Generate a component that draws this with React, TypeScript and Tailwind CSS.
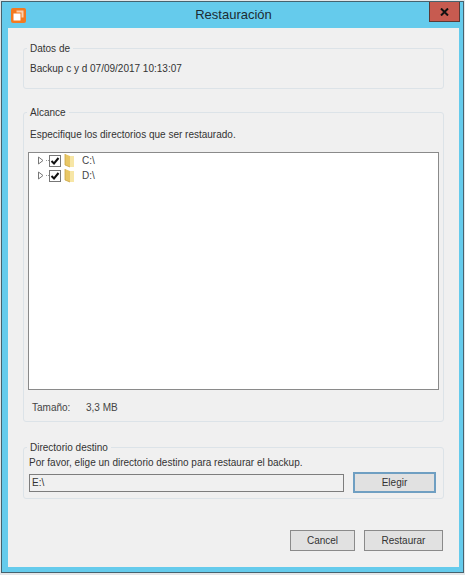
// App.tsx - Restauración dialog
import React from 'react';

const FONT = "font-['Liberation_Sans',Arial,sans-serif]";

const GroupBox: React.FC<{ title: string; className: string; children: React.ReactNode }> = ({ title, className, children }) => (
  <div className={`border border-[#dce3e8] rounded-[3px] ${className}`}>
    <div className="-mt-[7px] ml-[3px] w-fit bg-[#f0f0f0] px-[3px] text-[10px] leading-[14px] text-[#333]">{title}</div>
    {children}
  </div>
);

const FolderIcon = () => (
  <svg width="12" height="15" viewBox="0 0 12 15">
    <path d="M2 1 L7 3 L7 14 L2 12 Z" fill="#e9c765" />
    <path d="M7 3 L11 3 L11 14 L7 14 Z" fill="#f7e6a6" />
    <path d="M2 1 L2 12 L7 14" fill="none" stroke="#c9a545" strokeWidth="0.8" />
  </svg>
);

const TreeRow: React.FC<{ label: string }> = ({ label }) => (
  <div className="flex h-[15px] items-center">
    <svg width="8" height="9" viewBox="0 0 8 9" className="ml-[8px]">
      <path d="M1.5 1 L6 4.5 L1.5 8 Z" fill="#fff" stroke="#777" strokeWidth="1" />
    </svg>
    <div className="ml-[1px] w-[3px] border-t border-dotted border-[#999]" />
    <div className="flex h-[12px] w-[12px] items-center justify-center border border-[#777] bg-white">
      <svg width="10" height="10" viewBox="0 0 10 10">
        <path d="M1.5 5 L4 7.5 L8.5 2" fill="none" stroke="#111" strokeWidth="2" />
      </svg>
    </div>
    <div className="ml-[2px] flex items-center"><FolderIcon /></div>
    <span className="ml-[7px] text-[10px] text-[#444]">{label}</span>
  </div>
);

const Button: React.FC<{ label: string; className: string }> = ({ label, className }) => (
  <button className={`h-[21px] bg-[#e1e1e1] text-[10px] text-[#333] ${className}`}>{label}</button>
);

export default function App() {
  return (
    <div className={`h-[575px] w-[465px] overflow-hidden bg-[#e3e6e8] pl-[1px] pt-[1px] ${FONT}`}>
      <div className="flex h-[572px] w-[463px] flex-col border border-[#46626e] bg-[#65cbec] pb-[5px] pl-[6px] pr-[4px]">
        <div className="relative flex h-[26px] shrink-0 items-center justify-center">
          <div className="absolute left-[3px] top-[6px] flex h-[15px] w-[15px] items-center justify-center rounded-[2px] bg-[#f47a20]">
            <svg width="11" height="11" viewBox="0 0 11 11">
              <path d="M3.5 0.5 H10.5 V7.5 H8.5 V2.5 H3.5 Z" fill="#fbd0ad" />
              <path d="M0.5 3.5 H7.5 V10.5 H0.5 Z" fill="#fff" />
            </svg>
          </div>
          <span className="text-[13px] text-[#1d2b33]">Restauración</span>
          <div className="absolute right-[-1px] top-0 flex h-[20px] w-[31px] items-center justify-center border border-[#5a3a36] border-t-0 bg-[#c75b50]">
            <svg width="9" height="8" viewBox="0 0 9 8">
              <path d="M1 0.5 L8 7.5 M8 0.5 L1 7.5" stroke="#111" strokeWidth="2" />
            </svg>
          </div>
        </div>

        <div className="flex flex-1 flex-col bg-[#f0f0f0] pl-[15px] pr-[15px] pt-[20px]">
          <GroupBox title="Datos de" className="h-[41px]">
            <div className="ml-[6px] mt-[6px] text-[10px] leading-[14px] text-[#333]">Backup c y d 07/09/2017 10:13:07</div>
          </GroupBox>

          <GroupBox title="Alcance" className="mt-[23px] h-[310px]">
            <div className="ml-[6px] mt-[8px] text-[10px] leading-[14px] text-[#333]">Especifique los directorios que ser restaurado.</div>
            <div className="ml-[4px] mt-[10px] h-[238px] w-[411px] border border-[#8a8a8a] bg-white">
              <TreeRow label="C:\" />
              <TreeRow label="D:\" />
            </div>
            <div className="ml-[8px] mt-[11px] flex text-[10px] leading-[14px] text-[#444]">
              <span className="w-[54px]">Tamaño:</span>
              <span>3,3 MB</span>
            </div>
          </GroupBox>

          <GroupBox title="Directorio destino" className="mt-[25px] h-[52px]">
            <div className="ml-[5px] mt-[1px] text-[10px] leading-[14px] text-[#333]">Por favor, elige un directorio destino para restaurar el backup.</div>
            <div className="ml-[5px] mt-[2px] flex items-center gap-[9px]">
              <div className="h-[18px] w-[315px] border border-[#7d7d7d] bg-[#f0f0f0] pl-[2px] text-[10px] leading-[16px] text-[#333]">E:\</div>
              <Button label="Elegir" className="w-[83px] border-2 border-[#6f9fc2]" />
            </div>
          </GroupBox>

          <div className="mt-[31px] flex justify-end gap-[9px] pr-[1px]">
            <Button label="Cancel" className="w-[65px] border border-[#8a8a8a]" />
            <Button label="Restaurar" className="w-[79px] border border-[#8a8a8a]" />
          </div>
        </div>
      </div>
    </div>
  );
}
